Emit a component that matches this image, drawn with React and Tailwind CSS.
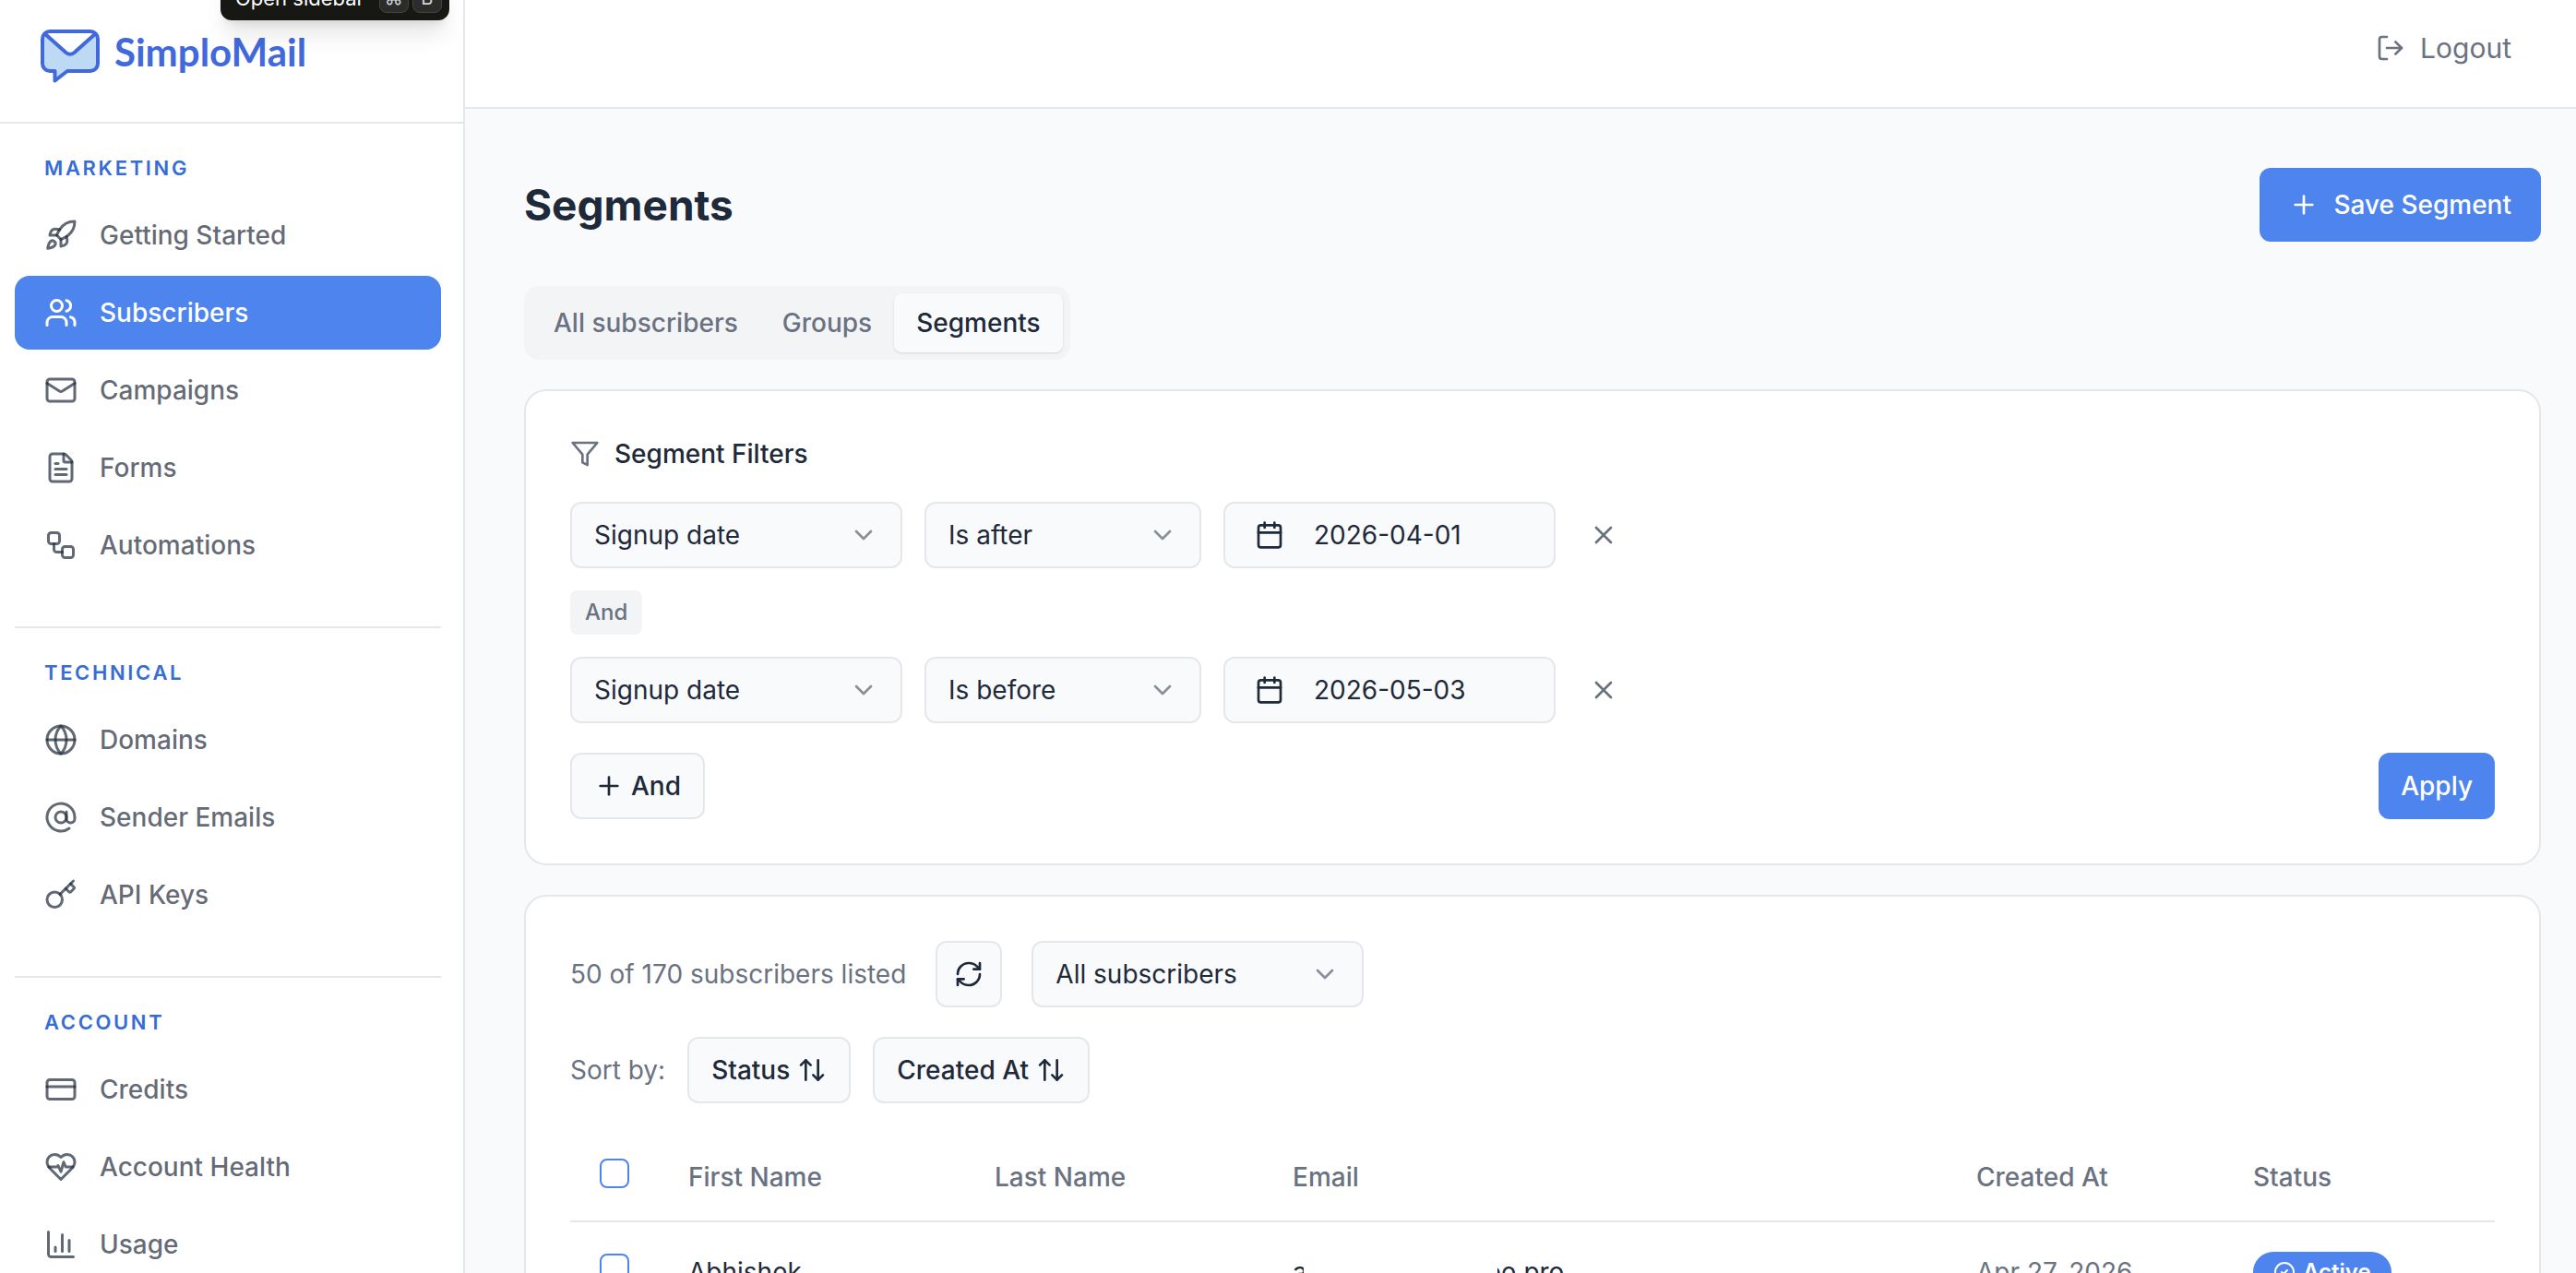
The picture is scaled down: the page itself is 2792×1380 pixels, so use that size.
import {
  ArrowUpDown,
  AtSign,
  Calendar,
  ChevronDown,
  CircleCheck,
  CreditCard,
  FileText,
  Globe,
  LogOut,
  Plus,
  RefreshCw,
  X,
} from "lucide-react";

// Line icons drawn on a 24px grid
function Line({ children, className = "size-9" }) {
  return (
    <svg
      className={className}
      viewBox="0 0 24 24"
      fill="none"
      stroke="currentColor"
      strokeWidth="2"
      strokeLinecap="round"
      strokeLinejoin="round"
      aria-hidden="true"
    >
      {children}
    </svg>
  );
}

const Rocket = () => (
  <Line>
    <path d="M4.5 16.5c-1.5 1.26-2 5-2 5s3.74-.5 5-2c.71-.84.7-2.13-.09-2.91a2.18 2.18 0 0 0-2.91-.09z" />
    <path d="m12 15-3-3a22 22 0 0 1 2-3.95A12.88 12.88 0 0 1 22 2c0 2.72-.78 7.5-6 11a22.35 22.35 0 0 1-4 2z" />
    <path d="M9 12H4s.55-3.03 2-4c1.62-1.08 5 0 5 0" />
    <path d="M12 15v5s3.03-.55 4-2c1.08-1.62 0-5 0-5" />
  </Line>
);

const Users = () => (
  <Line>
    <path d="M16 21v-2a4 4 0 0 0-4-4H6a4 4 0 0 0-4 4v2" />
    <circle cx="9" cy="7" r="4" />
    <path d="M22 21v-2a4 4 0 0 0-3-3.87" />
    <path d="M16 3.13a4 4 0 0 1 0 7.75" />
  </Line>
);

const Mail = () => (
  <Line>
    <rect width="20" height="16" x="2" y="4" rx="2" />
    <path d="m22 7-8.97 5.7a1.94 1.94 0 0 1-2.06 0L2 7" />
  </Line>
);

const Workflow = () => (
  <Line>
    <rect width="8" height="8" x="3" y="3" rx="2" />
    <path d="M7 11v4a2 2 0 0 0 2 2h4" />
    <rect width="8" height="8" x="13" y="13" rx="2" />
  </Line>
);

const Key = () => (
  <Line>
    <path d="m15.5 7.5 2.3 2.3a1 1 0 0 0 1.4 0l2.1-2.1a1 1 0 0 0 0-1.4L19 4" />
    <path d="m21 2-9.6 9.6" />
    <circle cx="7.5" cy="15.5" r="5.5" />
  </Line>
);

const HeartPulse = () => (
  <Line>
    <path d="M19 14c1.49-1.46 3-3.21 3-5.5A5.5 5.5 0 0 0 16.5 3c-1.76 0-3 .5-4.5 2-1.5-1.5-2.74-2-4.5-2A5.5 5.5 0 0 0 2 8.5c0 2.3 1.5 4.05 3 5.5l7 7Z" />
    <path d="M3.22 12H9.5l.5-1 2 4.5 2-7 1.5 3.5h5.27" />
  </Line>
);

const Chart = () => (
  <Line>
    <path d="M3 3v16a2 2 0 0 0 2 2h16" />
    <path d="M18 17V9" />
    <path d="M13 17V5" />
    <path d="M8 17v-3" />
  </Line>
);

const Funnel = () => (
  <Line className="size-8 text-gray-500">
    <polygon points="22 3 2 3 10 12.46 10 19 14 21 14 12.46 22 3" />
  </Line>
);

const NAV = [
  {
    title: "Marketing",
    items: [
      { label: "Getting Started", icon: Rocket },
      { label: "Subscribers", icon: Users, active: true },
      { label: "Campaigns", icon: Mail },
      { label: "Forms", icon: FileText },
      { label: "Automations", icon: Workflow },
    ],
  },
  {
    title: "Technical",
    items: [
      { label: "Domains", icon: Globe },
      { label: "Sender Emails", icon: AtSign },
      { label: "API Keys", icon: Key },
    ],
  },
  {
    title: "Account",
    items: [
      { label: "Credits", icon: CreditCard },
      { label: "Account Health", icon: HeartPulse },
      { label: "Usage", icon: Chart },
    ],
  },
];

const FILTERS = [
  { field: "Signup date", operator: "Is after", value: "2026-04-01" },
  { field: "Signup date", operator: "Is before", value: "2026-05-03" },
];

function Logo() {
  return (
    <a href="#" className="flex items-start gap-4">
      <svg className="h-[58px] w-16" viewBox="0 0 64 58" fill="none" aria-hidden="true">
        <path
          d="M10 2H54A8 8 0 0 1 62 10V37A8 8 0 0 1 54 45H29L15.500 55.500V45H10A8 8 0 0 1 2 37V10A8 8 0 0 1 10 2Z"
          fill="#bdd9f3"
        />
        <path d="M5 5Q7 2 10 2H54Q57 2 59 5L36 25.500Q32 28.500 28 25.500Z" fill="#fff" />
        <path
          d="M10 2H54A8 8 0 0 1 62 10V37A8 8 0 0 1 54 45H29L15.500 55.500V45H10A8 8 0 0 1 2 37V10A8 8 0 0 1 10 2ZM4.500 4.500L27.500 25Q32 28.500 36.500 25L59.500 4.500"
          stroke="#4169dc"
          strokeWidth="4"
          strokeLinejoin="round"
        />
      </svg>
      <span className="font-['Lato',sans-serif] text-[42px] leading-[48px] font-bold text-[#4169dc]">
        SimploMail
      </span>
    </a>
  );
}

function Sidebar() {
  return (
    <aside className="w-[504px] shrink-0 overflow-hidden border-r-2 border-gray-200 bg-white">
      <div className="border-b-2 border-gray-200 px-11 pt-8 pb-[42px]">
        <Logo />
      </div>
      <nav className="pr-6 pl-4">
        {NAV.map((section) => (
          <div key={section.title} className="border-b-2 border-gray-200 pt-8 pb-12">
            <h2 className="mb-4 px-8 text-[22px] leading-[33px] font-semibold tracking-[0.12em] text-[#366cd6] uppercase">
              {section.title}
            </h2>
            <ul className="flex flex-col gap-1">
              {section.items.map(({ label, icon: Icon, active }) => (
                <li key={label}>
                  <a
                    href="#"
                    className={
                      active
                        ? "flex h-20 items-center gap-6 rounded-2xl bg-[#4e84ee] px-8 font-medium text-white"
                        : "flex h-20 items-center gap-6 rounded-2xl px-8 font-medium text-gray-800/70"
                    }
                  >
                    <Icon className="size-9" />
                    {label}
                  </a>
                </li>
              ))}
            </ul>
          </div>
        ))}
      </nav>
    </aside>
  );
}

function SelectBox({ label, value, className }) {
  return (
    <div className={`relative ${className}`}>
      <select
        aria-label={label}
        defaultValue={value}
        className="h-[72px] w-full appearance-none rounded-xl border-2 border-gray-200 bg-[#f9fafc] px-6"
      >
        <option>{value}</option>
      </select>
      <ChevronDown className="pointer-events-none absolute top-5 right-[26px] size-8 opacity-50" />
    </div>
  );
}

function OutlineButton({ children }) {
  return (
    <button className="flex h-[72px] items-center gap-2 rounded-xl border-2 border-gray-200 bg-[#f9fafc] px-6 font-medium">
      {children}
    </button>
  );
}

function FilterRow({ filter }) {
  return (
    <div className="flex items-center gap-6">
      <SelectBox label="Field" value={filter.field} className="w-[360px]" />
      <SelectBox label="Condition" value={filter.operator} className="w-[300px]" />
      <button className="flex h-[72px] w-[360px] items-center gap-8 rounded-xl border-2 border-gray-200 bg-[#f9fafc] px-8">
        <Calendar className="size-8" />
        {filter.value}
      </button>
      <button aria-label="Remove filter" className="flex size-14 items-center justify-center text-gray-500">
        <X className="size-8" />
      </button>
    </div>
  );
}

function Checkbox({ label }) {
  return (
    <input
      type="checkbox"
      aria-label={label}
      className="block size-8 appearance-none rounded-lg border-2 border-[#4e84ee] bg-white"
    />
  );
}

function SubscribersTable() {
  return (
    <table className="mt-8 w-full table-fixed border-separate border-spacing-0 text-left">
      <thead className="text-gray-500">
        <tr className="h-[97px] *:border-b-2 *:border-gray-200 *:px-8 *:font-medium">
          <th className="w-24 pb-2">
            <Checkbox label="Select all" />
          </th>
          <th className="w-[332px]">First Name</th>
          <th className="w-[323px]">Last Name</th>
          <th>Email</th>
          <th className="w-[300px]">Created At</th>
          <th className="w-[294px]">Status</th>
        </tr>
      </thead>
      <tbody>
        <tr className="h-[108px] *:px-8">
          <td className="pb-2">
            <Checkbox label="Select Abhishek" />
          </td>
          <td>Abhishek</td>
          <td></td>
          <td>
            {/* Middle of the address is hidden */}
            <div className="flex">
              <span className="w-3 overflow-hidden">a</span>
              <span className="ml-[210px] flex w-1 justify-end overflow-hidden">o</span>
              <span>e.pro</span>
            </div>
          </td>
          <td className="text-gray-500">Apr 27, 2026</td>
          <td>
            <span className="flex h-11 w-fit items-center gap-2 rounded-full bg-[#4e84ee] px-[22px] text-2xl font-semibold text-white">
              <CircleCheck className="size-6" />
              Active
            </span>
          </td>
        </tr>
      </tbody>
    </table>
  );
}

export default function App() {
  return (
    <div className="relative flex h-screen overflow-hidden bg-[#f9fafc] font-['Inter',sans-serif] text-[28px] leading-10 text-gray-800">
      <Sidebar />

      <div className="min-w-0 flex-1">
        <header className="flex h-[118px] items-start justify-end border-b-2 border-gray-200 bg-white pt-8 pr-[38px]">
          <button className="flex items-center gap-4 px-8 text-[30px] text-gray-500">
            <LogOut className="size-8" />
            Logout
          </button>
        </header>

        <main className="pt-16 pr-[38px] pl-16">
          <div className="flex items-center justify-between">
            <h1 className="text-[46px] leading-[48px] font-bold">Segments</h1>
            <button className="flex h-20 items-center gap-4 rounded-xl bg-[#4e84ee] px-8 font-medium text-white">
              <Plus className="size-8" />
              Save Segment
            </button>
          </div>

          <div role="tablist" className="mt-12 flex h-20 w-fit rounded-2xl bg-gray-100 p-2 font-medium text-gray-500">
            <button role="tab" className="px-6">
              All subscribers
            </button>
            <button role="tab" className="px-6">
              Groups
            </button>
            <button role="tab" aria-selected="true" className="rounded-lg bg-[#f9fafc] px-6 text-gray-800 shadow-sm">
              Segments
            </button>
          </div>

          {/* Filters */}
          <section className="mt-8 rounded-3xl border-2 border-gray-200 bg-white p-12">
            <h2 className="mb-8 flex items-center gap-4 font-medium">
              <Funnel />
              Segment Filters
            </h2>
            <FilterRow filter={FILTERS[0]} />
            <div className="my-6 flex h-12 w-fit items-center rounded-lg bg-gray-100 px-4 text-2xl font-medium text-gray-500">
              And
            </div>
            <FilterRow filter={FILTERS[1]} />
            <div className="mt-8 flex justify-between">
              <OutlineButton>
                <Plus className="size-8" />
                And
              </OutlineButton>
              <button className="h-[72px] rounded-xl bg-[#4e84ee] px-6 font-medium text-white">Apply</button>
            </div>
          </section>

          {/* Subscribers */}
          <section className="mt-8 rounded-3xl border-2 border-gray-200 bg-white p-12">
            <div className="flex items-center gap-8">
              <p className="text-gray-500">50 of 170 subscribers listed</p>
              <button
                aria-label="Refresh"
                className="flex size-[72px] items-center justify-center rounded-xl border-2 border-gray-200 bg-[#f9fafc]"
              >
                <RefreshCw className="size-8" />
              </button>
              <SelectBox label="Show" value="All subscribers" className="w-[360px]" />
            </div>
            <div className="mt-8 flex items-center gap-6">
              <span className="text-gray-500">Sort by:</span>
              <OutlineButton>
                Status
                <ArrowUpDown className="size-8" />
              </OutlineButton>
              <OutlineButton>
                Created At
                <ArrowUpDown className="size-8" />
              </OutlineButton>
            </div>
            <SubscribersTable />
          </section>
        </main>
      </div>

      {/* Shortcut tooltip */}
      <div
        role="tooltip"
        className="absolute -top-[26px] left-[239px] flex h-12 items-center gap-1 rounded-xl bg-[#171714] pr-2 pl-4 text-[22px] text-white shadow-xl"
      >
        <span className="mr-3">Open sidebar</span>
        <kbd className="flex size-8 items-center justify-center rounded-lg border border-[#444] bg-[#2c2c2b] font-['Inter','DejaVu_Sans',sans-serif] text-xl text-gray-300">
          ⌘
        </kbd>
        <kbd className="flex size-8 items-center justify-center rounded-lg border border-[#444] bg-[#2c2c2b] font-['Inter',sans-serif] text-xl text-gray-300">
          B
        </kbd>
      </div>
    </div>
  );
}
